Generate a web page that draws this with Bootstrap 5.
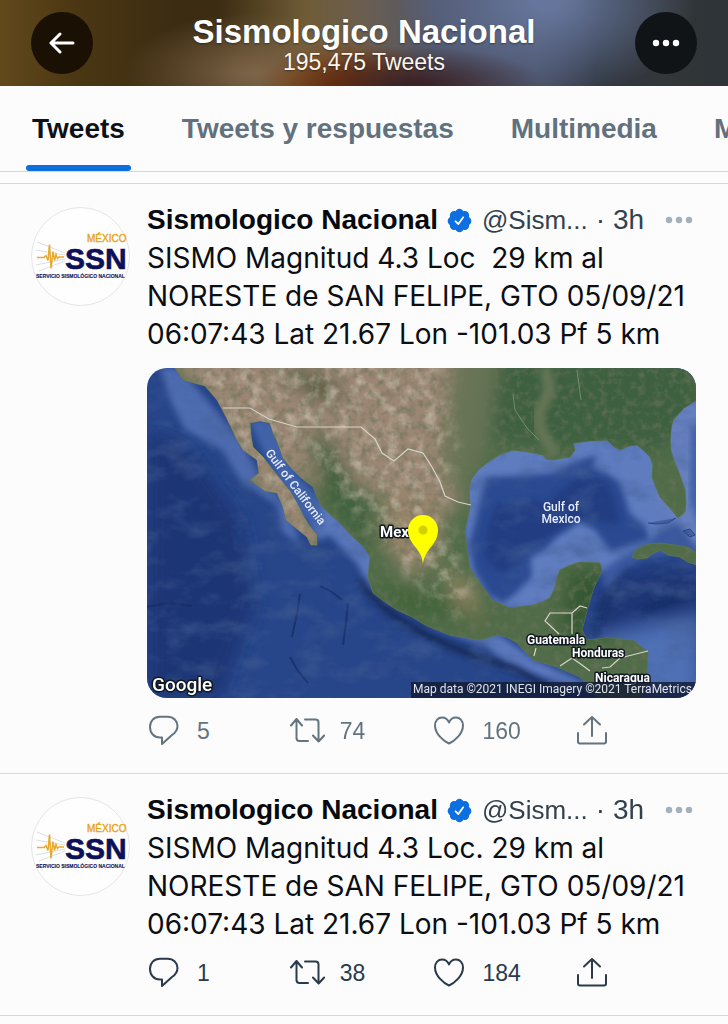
<!DOCTYPE html>
<html lang="es">
<head>
<meta charset="utf-8">
<meta name="viewport" content="width=device-width, initial-scale=1">
<title>Sismologico Nacional</title>
<link href="https://cdn.jsdelivr.net/npm/bootstrap@5.3.0/dist/css/bootstrap.min.css" rel="stylesheet">
<style>
  body { font-family: "Liberation Sans", Arial, sans-serif; font-size: 28px; line-height: 38px; color: #0b0e12; background: #fcfcfd; overflow-x: hidden; }
  .profile-bar {
    height: 86px; padding: 0 31px; color: #fff;
    background:
      radial-gradient(ellipse 130px 40px at 57% 100%, #3a2226 10%, transparent 100%),
      radial-gradient(ellipse 90px 50px at 48% 105%, #7c3404 20%, transparent 100%),
      radial-gradient(ellipse 130px 60px at 35% 85%, #7d6448 0, transparent 100%),
      radial-gradient(ellipse 150px 100px at 75% 0, #65759b 10%, transparent 100%),
      linear-gradient(90deg, #63491c 0, #4b3712 10%, #3c2c12 24%, #3c2c12 30%, #6f5c36 42%, #6a5e50 50%, #50566b 60%, #484f64 74%, #303640 82%, #33373a 90%, #2d3336 100%);
  }
  .round-btn { width: 62px; height: 62px; border: 0; background: #1a1004; color: #fff; }
  .round-btn.dark-btn { background: #111417; }
  .profile-title { font-size: 33px; line-height: 38px; text-shadow: 0 1px 2px #0006; }
  .profile-count { font-size: 23px; line-height: 22px; color: #fbf6ee; text-shadow: 0 1px 2px #0006; }
  .tabs-row { height: 86px; padding: 0 26px; gap: 45px; border-bottom: 1px solid #cfd9e0; margin-bottom: 11px; overflow: hidden; }
  .tabs-row a { padding: 6px 6px 0; color: #61717e; font-weight: 700; white-space: nowrap; text-decoration: none; border-bottom: 6px solid transparent; display: flex; align-items: center; position: relative; }
  .tabs-row a.current { color: #0d1218; }
  .tabs-row a.current::after { content: ""; position: absolute; left: 0; right: 0; bottom: -6px; height: 6px; border-radius: 3px; background: #0d6fdb; }
  .post { border-top: 1px solid #d3dce3; padding: 17px 32px 26px 31px; gap: 17px; }
  .post:last-child { border-bottom: 1px solid #d3dce3; }
  .avatar { width: 99px; height: 99px; margin-top: 6px; }
  .author { font-weight: 700; color: #07090c; text-decoration: none; }
  .post-text { font-family: Inter, "Liberation Sans", sans-serif; white-space: nowrap; }
  .verified { width: 27px; height: 27px; margin: 0 9px 0 8px; }
  .handle { font-size: 26px; }
  .meta { color: #33414f; }
  .more { border: 0; background: none; color: #a3b1bd; line-height: 0; margin-right: 3px; }
  .shot { border-radius: 20px; margin: 15px 0 17px; }
  .actions { display: grid; grid-template-columns: repeat(3, 26%) auto; color: #64747f; }
  .actions.strong { color: #2a3a4a; margin-top: 14px; }
  .actions button { border: 0; background: none; color: inherit; padding: 0; gap: 15px; font-size: 23px; line-height: 32px; }
  .actions svg { width: 35px; height: 34px; margin: -1px 0; fill: none; stroke: currentColor; stroke-width: 2; stroke-linecap: round; stroke-linejoin: round; }
  .map-label { font-family: Roboto, sans-serif; fill: #fff; paint-order: stroke; stroke: #101820; stroke-width: 3px; stroke-linejoin: round; }
  .sea-label { font-family: Roboto, sans-serif; font-size: 12px; font-weight: 500; fill: #e6ecfa; }
</style>
</head>
<body>

<svg width="0" height="0" class="position-absolute" aria-hidden="true">
  <symbol id="reply" viewBox="0 0 35 34"><path d="M13 2.700h7.500c6 0 10 4.300 10 9.300 0 4-2 6.700-5.500 9L15 30v-6.500h-2C7 23.500 3 19 3 13S7 2.700 13 2.700z"/></symbol>
  <symbol id="retweet" viewBox="0 0 35 34"><path d="M1 11.500L6.500 5l5.500 6.500M6.500 5v19c0 2 1 3 3 3H18M15 5.500h10.500c2 0 3 1 3 3v19M23 21.500l5.600 6 5.600-6"/></symbol>
  <symbol id="like" viewBox="0 0 35 34"><path d="M17 29.500C12 27.500 3 20 3 11.500 3 6.500 6.300 3.500 10 3.500c3.500 0 6 2.500 7 5 1-2.500 3.500-5 7-5 3.700 0 7 3 7 8 0 8.500-9 16-14 18z"/></symbol>
  <symbol id="share" viewBox="0 0 35 34"><path d="M17 22V3M9 10.500L17 3l8 7.500M3 19v8.500c0 1.500.7 2 2 2h24c1.300 0 2-.5 2-2V19"/></symbol>
  <symbol id="dots" viewBox="0 0 28 8"><circle cx="4" cy="4" r="3.200"/><circle cx="14" cy="4" r="3.200"/><circle cx="24" cy="4" r="3.200"/></symbol>
  <symbol id="check" viewBox="0 0 24 24">
    <path fill="#0d6fe0" d="M22.500 12.500c0-1.580-.875-2.950-2.148-3.600.154-.435.238-.905.238-1.400 0-2.210-1.710-3.998-3.818-3.998-.47 0-.92.084-1.336.25C14.818 2.415 13.510 1.500 12 1.500s-2.816.917-3.437 2.250c-.415-.165-.866-.25-1.336-.25-2.110 0-3.818 1.790-3.818 4 0 .494.083.964.237 1.400-1.272.65-2.147 2.018-2.147 3.600 0 1.495.782 2.798 1.942 3.486-.02.17-.032.34-.032.514 0 2.210 1.708 4 3.818 4 .47 0 .92-.086 1.335-.25.62 1.334 1.926 2.250 3.437 2.250 1.512 0 2.818-.916 3.437-2.250.415.163.865.248 1.336.248 2.110 0 3.818-1.790 3.818-4 0-.174-.012-.344-.033-.513 1.158-.687 1.943-1.990 1.943-3.484z"/>
    <path fill="none" stroke="#fff" stroke-width="1.600" stroke-linecap="round" stroke-linejoin="round" d="M8.500 12.700l2.500 2.500 4.300-6"/>
  </symbol>
  <symbol id="quake" viewBox="0 0 99 99">
    <circle cx="49.500" cy="49.500" r="49" fill="#fefefe" stroke="#e3e5e8"/>
    <path d="M6 35l28 11M5 43l29 5M5 58l29-6M8 64l26-10" stroke="#dcdfe3" fill="none"/>
    <path d="M6 50.500h7l2-2 2 5 1.500-16 1.500 24 2-17 1.500 9 1.500-6 1.500 4 1.500-1.500h5" fill="none" stroke="#e9a92c" stroke-width="1.500"/>
  </symbol>
</svg>

<header class="profile-bar d-flex align-items-center justify-content-between">
  <button class="round-btn rounded-circle d-flex align-items-center justify-content-center p-0" type="button" aria-label="Atrás">
    <svg width="26" height="22" viewBox="0 0 26 22" fill="none" stroke="currentColor" stroke-width="3" stroke-linecap="round" stroke-linejoin="round"><path d="M24 11H2M11 2l-9 9 9 9"/></svg>
  </button>
  <div class="text-center">
    <h1 class="profile-title fw-bold m-0">Sismologico Nacional</h1>
    <div class="profile-count">195,475 Tweets</div>
  </div>
  <button class="round-btn dark-btn rounded-circle d-flex align-items-center justify-content-center p-0" type="button" aria-label="Más opciones">
    <svg width="28" height="8" fill="currentColor"><use href="#dots"/></svg>
  </button>
</header>

<nav class="tabs-row d-flex">
  <a href="#" class="current" aria-current="page">Tweets</a>
  <a href="#">Tweets y respuestas</a>
  <a href="#">Multimedia</a>
  <a href="#">Me gusta</a>
</nav>

<main>
  <article class="post d-flex">
    <svg class="avatar flex-shrink-0" viewBox="0 0 99 99" font-family="Liberation Sans, Arial, sans-serif" fill="#0c1159" stroke="#0c1159">
      <use href="#quake"/>
      <text x="56" y="35" font-size="10" fill="#e8a51a" stroke="#e8a51a" stroke-width=".4">MÉXICO</text>
      <text x="34" y="62" font-size="30" font-weight="700" stroke-width=".6">SSN</text>
      <text x="5" y="71" font-size="5" font-weight="700" stroke-width=".1">SERVICIO SISMOLÓGICO NACIONAL</text>
    </svg>
    <div class="flex-grow-1">
      <div class="d-flex align-items-center">
        <a href="#" class="author">Sismologico Nacional</a>
        <svg class="verified"><use href="#check"/></svg>
        <span class="meta handle">@Sism...</span>
        <span class="meta ms-2">· 3h</span>
        <button class="more ms-auto p-0" type="button" aria-label="Más"><svg width="28" height="8" fill="currentColor"><use href="#dots"/></svg></button>
      </div>
      <div class="post-text">SISMO Magnitud 4.3 Loc&nbsp; 29 km al<br>NORESTE de SAN FELIPE, GTO 05/09/21<br>06:07:43 Lat 21.67 Lon -101.03 Pf 5 km</div>

      <svg class="shot d-block w-100" viewBox="147 368 549 330" role="img" aria-label="Mapa del epicentro">
        <defs>
          <path id="land" d="M175 368L183 380 205 386 217 400 225 415 231 427 237 440 243 450 257 460 259 473 250 480 265 491 277 493 283 507 286 520 297 529 307 537 311 545 317 545 317 535 309 525 303 515 297 503 290 491 277 475 263 457 253 447 251 435 250 423 260 421 270 423 273 433 277 441 283 458 292 469 300 477 313 487 316 495 322 507 340 523 353 537 364 547 370 557 368 577 373 593 385 602 397 610 412 617 427 626 450 635 480 640 497 635 507 637 517 643 525 652 533 660 557 667 580 677 590 688 597 699H641L645 685 647 670 648 652 633 640 607 638 587 640 582 630 587 610 593 590 602 570 600 563 580 562 568 566 560 570 557 577 555 587 550 598 542 602 533 605 510 608 492 600 486 591 480 583 470 568 467 550 465 530 470 507 469 490 471 480 478 470 487 463 499 455 513 450 528 452 543 455 546 459 553 460 563 458 570 457 575 450 573 443 590 441 607 440 613 446 620 450 629 446 637 445 643 450 650 457 653 465 652 477 657 490 660 497 669 507 678 518 685 512 686 502 685 490 680 475 675 463 671 451 670 440 671 429 673 420 684 408 697 400V367zM632 557L637 549 648 544 660 543 675 545 687 547 697 553V565L688 562 680 557 668 555 660 550 652 554 647 558 638 559z"/>
          <clipPath id="land-clip"><use href="#land"/></clipPath>
          <filter id="soft" x="-30%" y="-30%" width="160%" height="160%"><feGaussianBlur stdDeviation="9"/></filter>
          <filter id="haze" x="-20%" y="-20%" width="140%" height="140%"><feGaussianBlur stdDeviation="3"/></filter>
          <mask id="dry-area" maskUnits="userSpaceOnUse" x="147" y="368" width="549" height="330">
            <path d="M190 350H440L455 440 445 520 475 600 465 620 410 580 370 530 320 470 300 440 280 460 310 530 300 540 240 450 215 400z" fill="#fff" filter="url(#soft)"/>
          </mask>
          <filter id="grain" x="0" y="0" width="100%" height="100%">
            <feTurbulence type="fractalNoise" baseFrequency=".13" numOctaves="4" seed="8"/>
            <feColorMatrix values="0 0 0 0 .14  0 0 0 0 .17  0 0 0 0 .1  2.400 0 0 0 -1.050"/>
          </filter>
          <filter id="grain-light" x="0" y="0" width="100%" height="100%">
            <feTurbulence type="fractalNoise" baseFrequency=".08" numOctaves="4" seed="3"/>
            <feColorMatrix values="0 0 0 0 .74  0 0 0 0 .67  0 0 0 0 .57  2 0 0 0 -.9"/>
          </filter>
          <filter id="waves" x="0" y="0" width="100%" height="100%">
            <feTurbulence type="fractalNoise" baseFrequency=".03 .05" numOctaves="5" seed="5"/>
            <feColorMatrix values="0 0 0 0 .06  0 0 0 0 .12  0 0 0 0 .3  2.200 0 0 0 -1"/>
          </filter>
        </defs>
        <rect x="147" y="368" width="549" height="330" fill="#274589"/>
        <g filter="url(#soft)">
          <path d="M147 430L185 445 240 520 255 600 220 698H147z" fill="#1d3675"/>
          <path d="M600 590L640 570 700 565V625L640 615 590 640z" fill="#1d3673"/>
          <path d="M590 640L700 615V698H640z" fill="#4f70b5"/>
        </g>
        <g filter="url(#haze)" fill="#5b78bd">
          <path d="M160 368H180L240 440 262 480 290 510 300 545 282 532 277 505 240 480 222 450 185 430 170 400z" opacity=".75"/>
          <path d="M310 490L345 520 376 555 374 580 395 606 370 590 358 565 330 535 317 540 300 505z"/>
          <path d="M425 626L497 633 535 660 600 690 560 683 510 668 485 645z"/>
          <path d="M248 420H275L295 472 320 500 325 535 300 515 270 465z" fill="#4263aa"/>
          <path d="M600 565L625 535 655 520 700 520 700 550 640 560 605 590z" fill="#3a58a0"/>
        </g>
        <path d="M460 430H675L684 520 660 530 645 545 625 555 600 572 560 610H500L465 570z" fill="#5e7cbf" filter="url(#haze)"/>
        <path d="M664 380L705 380V560L684 530 655 500z" fill="#6680bf" filter="url(#haze)"/>
        <path d="M692 430L700 420V530L690 500z" fill="#405da6" filter="url(#haze)"/>
        <path d="M482 493L486 477 515 476 553 473 575 462 597 455 593 467 608 474 620 482 625 497 630 514 645 526 650 540 610 552 595 530 580 522 557 537 545 550 530 557 532 577 515 594 503 603 488 594 474 570 469 545z" fill="#2c4a91" filter="url(#haze)"/>
        <path d="M497 503L530 500 550 502 560 490 580 476 605 480 615 500 620 525 595 522 580 517 555 532 535 546 520 563 500 575 483 555 488 525z" fill="#203d82" filter="url(#haze)"/>
        <path d="M595 638Q603 592 630 568M640 612L697 590" stroke="#122759" stroke-width="3" fill="none" filter="url(#haze)"/>
        <path d="M360 581Q380 611 425 634T515 668L575 704" stroke="#132551" stroke-width="6" fill="none" filter="url(#haze)"/>
        <path d="M320 586l12 6 10 8M348 603l-2 20-3 22M300 594l-3 20-5 23M290 657l8 14 10 12M147 607l20-4 25 3" stroke="#162b62" stroke-width="2" fill="none" opacity=".7"/>
        <path d="M648 523l8 1 12-1 8-5M683 531l7-2 5 6-5 2z" stroke="#2a437f" fill="#2a437f" fill-opacity=".5"/>
        <rect x="147" y="368" width="549" height="330" filter="url(#waves)" opacity=".6"/>

        <use href="#land" fill="#506c48" stroke="#587453"/>
        <g clip-path="url(#land-clip)">
          <g filter="url(#soft)">
            <path d="M160 350H455L452 440 466 500 436 520 405 500 370 492 330 470 318 490 290 465 330 545 300 560 225 440 190 385z" fill="#9a8672"/>
            <path d="M455 350H500L485 450 460 500 440 470z" fill="#687555"/>
            <path d="M500 350H700V430L660 450 560 450 490 440z" fill="#3c6040"/>
            <path d="M305 430L330 440 352 480 378 545 360 540 325 495z" fill="#3e613b"/>
            <path d="M380 490L445 500 440 555 410 580 385 545z" fill="#97846a"/>
            <path d="M440 560L475 590 483 632 460 610z" fill="#988763"/>
            <path d="M280 365L335 380 342 405 310 398z" fill="#55593e"/>
            <path d="M570 570h40v70h-50z" fill="#355833"/>
            <path d="M375 585L440 595 500 625 400 610z" fill="#3f6439"/>
          </g>
          <path d="M545 368L550 390 538 415 540 430 556 455" stroke="#647655" stroke-width="12" fill="none" filter="url(#haze)"/>
          <rect x="147" y="368" width="549" height="330" filter="url(#grain)" opacity=".7"/>
          <g mask="url(#dry-area)"><rect x="147" y="368" width="549" height="330" filter="url(#grain-light)" opacity=".6"/></g>
        </g>
        <path d="M513 394l2 16 12 18 12 12M577 370l4 30" stroke="#8d9d7d" fill="none" opacity=".7"/>
        <g stroke="#d9d4c8" stroke-width="1.200" fill="none">
          <path d="M223 408H250L269 419 297 427H361L375 439 382 453 394 461 408 449 423 453 432 467 440 482 445 496 458 502 471 505"/>
          <path d="M559 634L545 621 550 613H572L580 606 587 608M572 613V634M534 656L536 648M560 666L572 658 582 665 590 671M602 668L610 667 620 658 648 651"/>
        </g>

        <g transform="translate(265 453) rotate(53)"><text class="sea-label" x="0" y="0">Gulf of California</text></g>
        <text class="sea-label" x="561" y="511" text-anchor="middle">Gulf of</text>
        <text class="sea-label" x="561" y="523" text-anchor="middle">Mexico</text>
        <text class="map-label" x="380" y="537" font-size="15" font-weight="700">Mex</text>
        <path d="M423 564C422 548 408 545 408 530A15 15 0 1 1 438 530C438 545 425 548 423 564z" fill="#ff0"/>
        <circle cx="423" cy="530" r="4.500" fill="#d2d100"/>
        <g class="map-label" font-size="12" font-weight="700">
          <text x="527" y="644">Guatemala</text>
          <text x="572" y="657">Honduras</text>
          <text x="595" y="682">Nicaragua</text>
        </g>
        <rect x="411" y="682" width="285" height="16" fill="#111a35" fill-opacity=".8"/>
        <text x="413" y="693" font-family="Roboto, sans-serif" font-size="12" fill="#dfe3ea">Map data ©2021 INEGI Imagery ©2021 TerraMetrics</text>
        <text class="map-label" x="152" y="691" font-size="19" font-weight="500">Google</text>
      </svg>

      <div class="actions">
        <button class="d-flex align-items-center" type="button" aria-label="Responder"><svg><use href="#reply"/></svg>5</button>
        <button class="d-flex align-items-center" type="button" aria-label="Retwittear"><svg><use href="#retweet"/></svg>74</button>
        <button class="d-flex align-items-center" type="button" aria-label="Me gusta"><svg><use href="#like"/></svg>160</button>
        <button class="d-flex align-items-center" type="button" aria-label="Compartir"><svg><use href="#share"/></svg></button>
      </div>
    </div>
  </article>

  <article class="post d-flex">
    <svg class="avatar flex-shrink-0" viewBox="0 0 99 99" font-family="Liberation Sans, Arial, sans-serif" fill="#0c1159" stroke="#0c1159">
      <use href="#quake"/>
      <text x="56" y="35" font-size="10" fill="#e8a51a" stroke="#e8a51a" stroke-width=".4">MÉXICO</text>
      <text x="34" y="62" font-size="30" font-weight="700" stroke-width=".6">SSN</text>
      <text x="5" y="71" font-size="5" font-weight="700" stroke-width=".1">SERVICIO SISMOLÓGICO NACIONAL</text>
    </svg>
    <div class="flex-grow-1">
      <div class="d-flex align-items-center">
        <a href="#" class="author">Sismologico Nacional</a>
        <svg class="verified"><use href="#check"/></svg>
        <span class="meta handle">@Sism...</span>
        <span class="meta ms-2">· 3h</span>
        <button class="more ms-auto p-0" type="button" aria-label="Más"><svg width="28" height="8" fill="currentColor"><use href="#dots"/></svg></button>
      </div>
      <div class="post-text">SISMO Magnitud 4.3 Loc. 29 km al<br>NORESTE de SAN FELIPE, GTO 05/09/21<br>06:07:43 Lat 21.67 Lon -101.03 Pf 5 km</div>
      <div class="actions strong">
        <button class="d-flex align-items-center" type="button" aria-label="Responder"><svg><use href="#reply"/></svg>1</button>
        <button class="d-flex align-items-center" type="button" aria-label="Retwittear"><svg><use href="#retweet"/></svg>38</button>
        <button class="d-flex align-items-center" type="button" aria-label="Me gusta"><svg><use href="#like"/></svg>184</button>
        <button class="d-flex align-items-center" type="button" aria-label="Compartir"><svg><use href="#share"/></svg></button>
      </div>
    </div>
  </article>
</main>

<script src="https://cdn.jsdelivr.net/npm/bootstrap@5.3.0/dist/js/bootstrap.bundle.min.js"></script>
</body>
</html>
